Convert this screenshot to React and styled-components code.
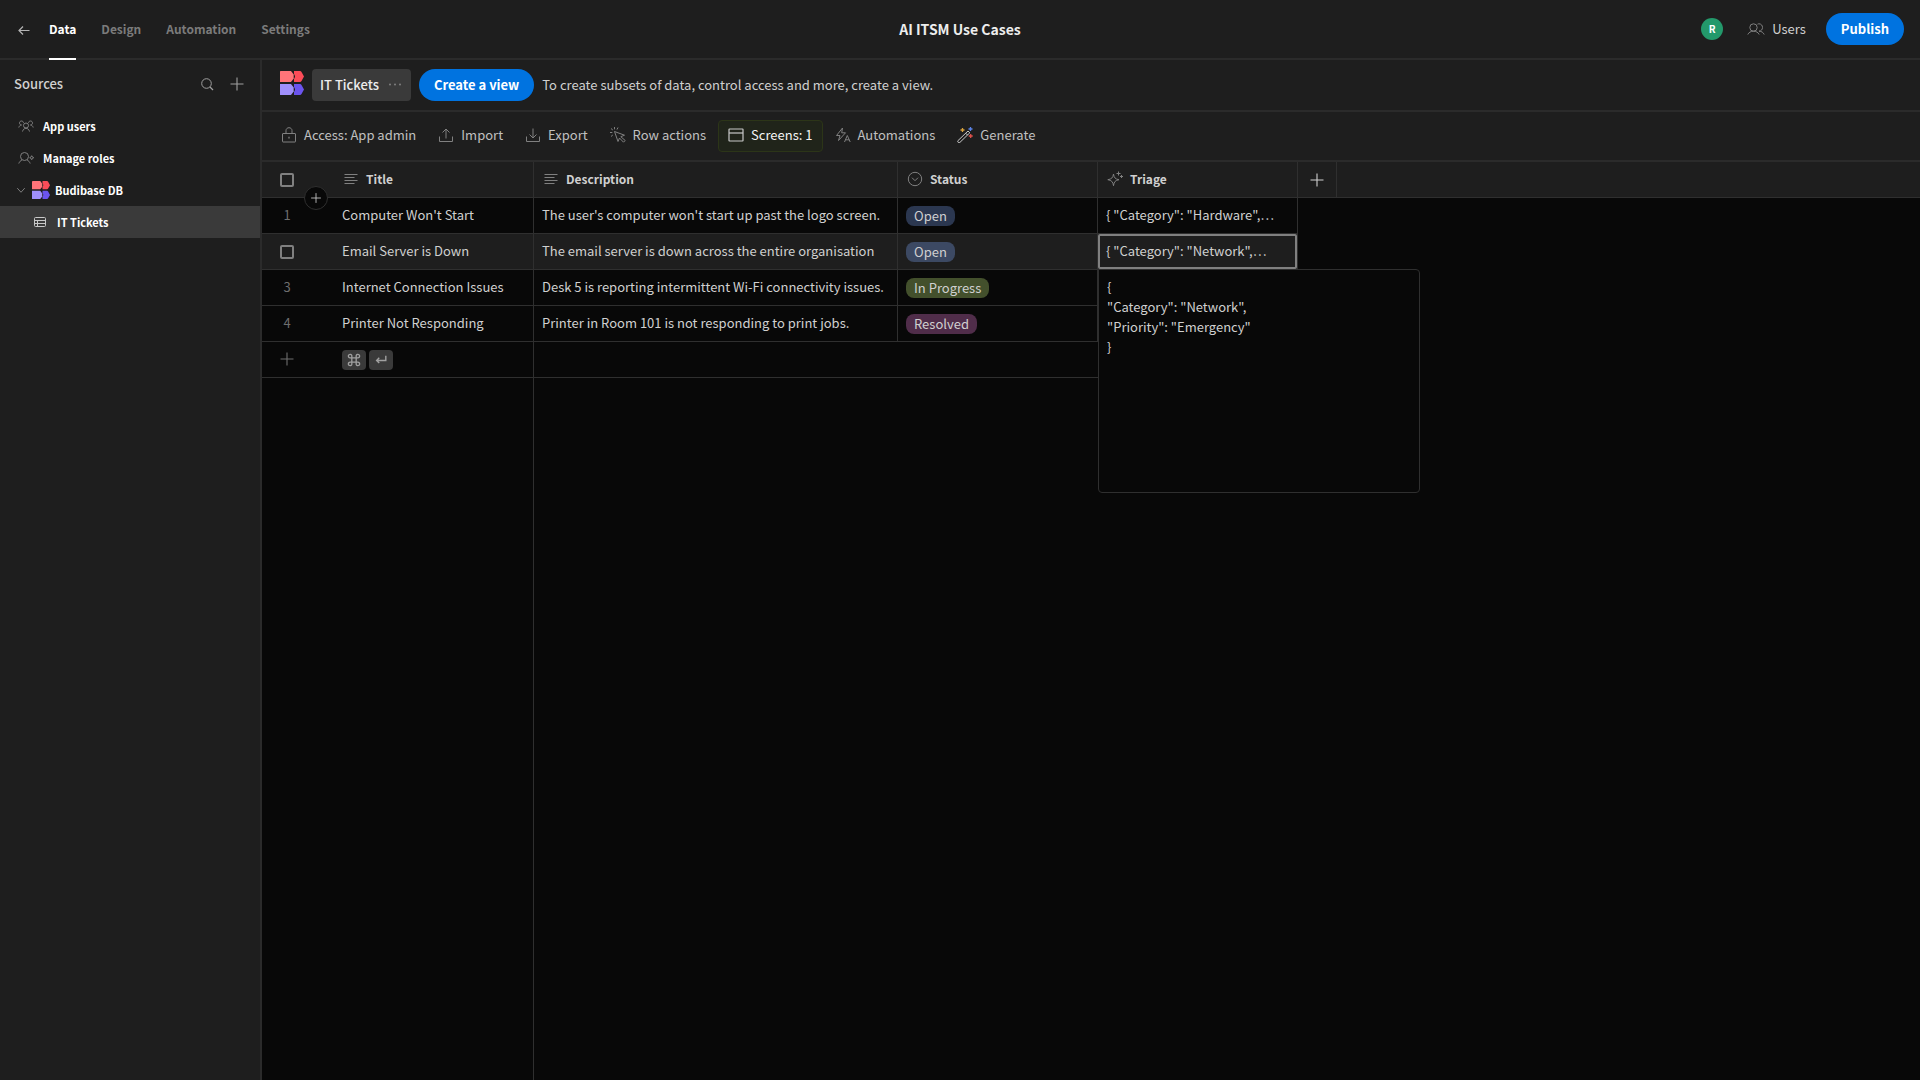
import React from 'react';
import styled, { createGlobalStyle, css } from 'styled-components';

const NAV = ['Data', 'Design', 'Automation', 'Settings'];

const TOOLS = [
  { label: 'Access: App admin', icon: LockIcon },
  { label: 'Import', icon: ImportIcon },
  { label: 'Export', icon: ExportIcon },
  { label: 'Row actions', icon: CursorIcon },
  { label: 'Screens: 1', icon: ScreenIcon, active: true },
  { label: 'Automations', icon: AutomationsIcon },
  { label: 'Generate', icon: WandIcon, bright: true },
];

const COLUMNS = [
  { label: 'Title', icon: TextIcon },
  { label: 'Description', icon: TextIcon },
  { label: 'Status', icon: OptionsIcon },
  { label: 'Triage', icon: SparkleIcon },
];

const ROWS = [
  {
    id: 1,
    title: "Computer Won't Start",
    description: "The user's computer won't start up past the logo screen.",
    status: 'Open',
    triage: '{ "Category": "Hardware",…',
  },
  {
    id: 2,
    title: 'Email Server is Down',
    description: 'The email server is down across the entire organisation',
    status: 'Open',
    triage: '{ "Category": "Network",…',
    hovered: true,
  },
  {
    id: 3,
    title: 'Internet Connection Issues',
    description: 'Desk 5 is reporting intermittent Wi-Fi connectivity issues.',
    status: 'In Progress',
    triage: '',
  },
  {
    id: 4,
    title: 'Printer Not Responding',
    description: 'Printer in Room 101 is not responding to print jobs.',
    status: 'Resolved',
    triage: '',
  },
];

const STATUS_COLORS = {
  Open: '#2b3750',
  'In Progress': '#43502c',
  Resolved: '#502d4a',
};

const TRIAGE_VALUE = `{
"Category": "Network",
"Priority": "Emergency"
}`;

export default function App() {
  return (
    <>
      <GlobalStyle />
      <Page>
        <TopBar />
        <Body>
          <Sources />
          <Main>
            <ViewBar>
              <Logo size={24} />
              <ViewTab type="button">
                IT Tickets
                <DotsIcon />
              </ViewTab>
              <PrimaryButton type="button">Create a view</PrimaryButton>
              <Hint>
                To create subsets of data, control access and more, create a
                view.
              </Hint>
            </ViewBar>
            <ToolBar>
              {TOOLS.map(({ label, icon: Icon, active, bright }) => (
                <ToolButton
                  key={label}
                  type="button"
                  $active={active}
                  $bright={bright}
                >
                  <Icon />
                  {label}
                </ToolButton>
              ))}
            </ToolBar>
            <DataGrid />
          </Main>
        </Body>
      </Page>
    </>
  );
}

function TopBar() {
  return (
    <Header>
      <Nav>
        <BackButton type="button" aria-label="Back">
          <BackIcon />
        </BackButton>
        {NAV.map((item, index) => (
          <NavLink key={item} href="#" $active={index === 0}>
            {item}
          </NavLink>
        ))}
      </Nav>
      <AppName>AI ITSM Use Cases</AppName>
      <HeaderRight>
        <Avatar>R</Avatar>
        <UsersButton type="button">
          <UsersIcon />
          Users
        </UsersButton>
        <PrimaryButton type="button">Publish</PrimaryButton>
      </HeaderRight>
    </Header>
  );
}

function Sources() {
  return (
    <Sidebar>
      <SidebarHeader>
        <SidebarTitle>Sources</SidebarTitle>
        <IconButton type="button" aria-label="Search sources">
          <SearchIcon />
        </IconButton>
        <IconButton type="button" aria-label="Add source">
          <PlusIcon />
        </IconButton>
      </SidebarHeader>
      <SourceLink href="#">
        <GroupIcon />
        App users
      </SourceLink>
      <SourceLink href="#">
        <RolesIcon />
        Manage roles
      </SourceLink>
      <SourceLink href="#" $parent>
        <ChevronIcon />
        <Logo size={18} />
        Budibase DB
      </SourceLink>
      <SourceLink href="#" $selected>
        <TableIcon />
        IT Tickets
      </SourceLink>
    </Sidebar>
  );
}

function DataGrid() {
  return (
    <GridWrap>
      <Grid>
        <colgroup>
          <Col $width={72} />
          <Col $width={200} />
          <Col $width={364} />
          <Col $width={200} />
          <Col $width={200} />
          <Col $width={39} />
          <col />
        </colgroup>
        <thead>
          <tr>
            <GutterHead>
              <GutterBox>
                <Checkbox aria-label="Select all rows" />
              </GutterBox>
              <InsertButton type="button" aria-label="Insert row">
                <PlusIcon />
              </InsertButton>
            </GutterHead>
            {COLUMNS.map(({ label, icon: Icon }) => (
              <HeadCell key={label}>
                <HeadLabel>
                  <Icon />
                  {label}
                </HeadLabel>
              </HeadCell>
            ))}
            <HeadCell>
              <AddColumn type="button" aria-label="Add column">
                <PlusIcon />
              </AddColumn>
            </HeadCell>
            <HeadRest />
          </tr>
        </thead>
        <tbody>
          {ROWS.map(row => (
            <Row key={row.id} $hovered={row.hovered}>
              <GutterCell>
                {row.hovered ? (
                  <GutterBox>
                    <Checkbox aria-label={`Select row ${row.id}`} />
                  </GutterBox>
                ) : (
                  <RowNumber>{row.id}</RowNumber>
                )}
              </GutterCell>
              <Cell>{row.title}</Cell>
              <Cell>{row.description}</Cell>
              <StatusCell>
                <Badge $color={STATUS_COLORS[row.status]} $light={row.hovered}>
                  {row.status}
                </Badge>
              </StatusCell>
              <Cell $focused={row.hovered}>
                {row.triage}
                {row.hovered && (
                  <Editor
                    aria-label="Triage"
                    readOnly
                    value={TRIAGE_VALUE}
                  />
                )}
              </Cell>
            </Row>
          ))}
          <tr>
            <GutterCell>
              <RowNumber>
                <PlusIcon />
              </RowNumber>
            </GutterCell>
            <StatusCell>
              <Keys>
                <Key>
                  <CommandIcon />
                </Key>
                <Key>
                  <ReturnIcon />
                </Key>
              </Keys>
            </StatusCell>
            <Cell colSpan={3} />
          </tr>
          <tr>
            <RestCell />
            <RestCell $line />
          </tr>
        </tbody>
      </Grid>
    </GridWrap>
  );
}

function Checkbox(props) {
  return <CheckInput type="checkbox" {...props} />;
}

/* Icons */

function Icon({ children, size = 16 }) {
  return (
    <Svg
      width={size}
      height={size}
      viewBox="0 0 16 16"
      fill="none"
      stroke="currentColor"
      aria-hidden="true"
    >
      {children}
    </Svg>
  );
}

function Logo({ size }) {
  return (
    <Svg width={size} height={size} viewBox="0 0 24 24" aria-hidden="true">
      <path d="M0 .5Q0 0 .5 0H11L13.700 3.500V7.500L11 11H0Z" fill="#ff7479" />
      <path d="M14 0H20Q21 0 21.500 1L24 5.500L21.500 10Q21 11 20 11H14V8L15 6V5L14 3Z" fill="#fb4c58" />
      <path d="M0 13H11L13.700 16.500V20.500L11 24H.5Q0 24 0 23.500Z" fill="#9f8ffb" />
      <path d="M14 13H20Q21 13 21.500 14L24 18.500L21.500 23Q21 24 20 24H14V21L15 19V18L14 16Z" fill="#6b54ee" />
    </Svg>
  );
}

function BackIcon() {
  return (
    <Icon>
      <path d="M13.500 8.500H3M7 4.500L3 8.500L7 12.500" strokeWidth="1.200" />
    </Icon>
  );
}

function SearchIcon() {
  return (
    <Icon>
      <circle cx="7.500" cy="7.500" r="4.800" />
      <path d="M11 11L14 14" strokeWidth="1.200" />
    </Icon>
  );
}

function PlusIcon() {
  return (
    <Icon>
      <path d="M8 1.500V14.500M1.500 8H14.500" strokeWidth="1.100" />
    </Icon>
  );
}

function DotsIcon() {
  return (
    <Icon>
      <g fill="currentColor" stroke="none">
        <circle cx="3" cy="7.500" r="1" />
        <circle cx="8" cy="7.500" r="1" />
        <circle cx="13" cy="7.500" r="1" />
      </g>
    </Icon>
  );
}

function ChevronIcon() {
  return (
    <Icon size={12}>
      <path d="M3 5.500L8 11L13 5.500" strokeWidth="1.300" />
    </Icon>
  );
}

function GroupIcon() {
  return (
    <Icon>
      <circle cx="8" cy="7.500" r="2.500" />
      <path d="M4.500 13.500C5 11.500 6.300 10.300 8 10.300S11 11.500 11.500 13.500" />
      <path d="M5.500 4.800C5.300 3.600 4.500 3 3.500 3C2.300 3 1.500 3.900 1.500 5S2.300 7 3.500 7C2.200 7.200 1.200 8 .8 9.500" />
      <path d="M10.500 4.800C10.700 3.600 11.500 3 12.500 3C13.700 3 14.500 3.900 14.500 5S13.700 7 12.500 7C13.800 7.200 14.800 8 15.200 9.500" />
    </Icon>
  );
}

function RolesIcon() {
  return (
    <Icon>
      <circle cx="6.500" cy="6.500" r="4" />
      <path d="M.8 13.500C1.500 11.700 2.600 10.600 4 9.900M9 9.900C10.400 10.600 11.500 11.700 12.200 13.500" />
      <circle cx="13.700" cy="7.700" r="1.300" />
      <path d="M13.700 5.500V6.400M13.700 9V9.900M11.500 7.700H12.400M15 7.700H15.900" />
    </Icon>
  );
}

function UsersIcon() {
  return (
    <Svg
      width="18"
      height="16"
      viewBox="0 0 18 16"
      fill="none"
      stroke="currentColor"
      aria-hidden="true"
    >
      <circle cx="6.500" cy="6.500" r="3.700" />
      <path d="M.8 13.500C1.800 11.400 3.800 10.200 6.500 10.200S11.200 11.400 12.200 13.500" />
      <path d="M10.500 3.200C11 2.900 11.500 2.800 12 2.800C14 2.800 15.500 4.400 15.500 6.500C15.500 8.500 14 10.200 12 10.200C14.500 10.200 16.200 11.400 17.200 13.500" />
    </Svg>
  );
}

function TableIcon() {
  return (
    <Icon>
      <rect x="2.500" y="3.500" width="11" height="9" rx="1" />
      <path d="M2.500 6.500H13.500M2.500 9.500H13.500M5.500 6.500V12.500" />
    </Icon>
  );
}

function LockIcon() {
  return (
    <Icon>
      <rect x="1.500" y="6.500" width="13" height="8.500" rx=".5" />
      <path d="M5 6.500V3.500C5 1.900 6.300 .7 8 .7S11 1.900 11 3.500V6.500" />
      <path d="M8 9.800V11.500" strokeWidth="1.300" />
    </Icon>
  );
}

function ImportIcon() {
  return (
    <Icon>
      <path d="M1.500 9.500V14.500H14.500V9.500" />
      <path d="M8 11.500V2.500M4.500 5.500L8 2L11.500 5.500" />
    </Icon>
  );
}

function ExportIcon() {
  return (
    <Icon>
      <path d="M1.500 9.500V14.500H14.500V9.500" />
      <path d="M8 1.500V10.500M4.500 7.500L8 11L11.500 7.500" />
    </Icon>
  );
}

function CursorIcon() {
  return (
    <Icon>
      <path d="M4.500 4.500L14.500 8.200L10.800 9.700L15.200 13.500L13.500 15.200L9.500 11L8 14.500Z" />
      <path d="M4.500 0V2.300M1 1.500L2.800 3M0 5.500H2.300M8 .5L7 2.500M1 9.500L2.800 8" />
    </Icon>
  );
}

function ScreenIcon() {
  return (
    <Icon>
      <rect x="1" y="2" width="14" height="12" rx=".5" strokeWidth="1.200" />
      <path d="M1 6H15" strokeWidth="1.200" />
    </Icon>
  );
}

function AutomationsIcon() {
  return (
    <Icon>
      <path d="M7.500 1L1.500 8.500H5L3.500 13.500L10.500 5.800H6.700Z" />
      <path d="M9.500 15L12.300 8.500L15.200 15M10.500 12.800H14.200" />
    </Icon>
  );
}

function WandIcon() {
  return (
    <Icon>
      <path d="M.8 13.800L11 4L12.800 5.800L2.800 15.500C1.500 16 .5 15.200 .8 13.800Z" />
      <path d="M8.700 6.200L10.500 8" />
      <path d="M5.500 1V5M3.500 3H7.500" stroke="#d9a23c" strokeWidth="1.300" />
      <path d="M13.500 0V4M11.500 2H15.500" stroke="#5b84e8" strokeWidth="1.300" />
      <path d="M13.700 7V11M11.700 9H15.700" stroke="#e0524c" strokeWidth="1.300" />
    </Icon>
  );
}

function TextIcon() {
  return (
    <Icon>
      <path d="M1.500 3.500H14.500M1.500 6.500H11.500M1.500 9.500H14.500M1.500 12.500H11.500" />
    </Icon>
  );
}

function OptionsIcon() {
  return (
    <Icon>
      <circle cx="8" cy="8" r="6.700" />
      <path d="M5 6.700L8 9.700L11 6.700" />
    </Icon>
  );
}

function SparkleIcon() {
  return (
    <Icon>
      <path d="M6.500 3C7 6.700 8.300 8.200 12 8.700C8.300 9.300 7 10.800 6.500 14.700C6 10.800 4.500 9.300 .8 8.700C4.500 8.200 6 6.700 6.500 3Z" />
      <path d="M11.500 .5V4.500M9.500 2.500H13.500M14.500 4V7M13 5.500H16" />
    </Icon>
  );
}

function CommandIcon() {
  return (
    <Icon size={14}>
      <path
        d="M5.500 5.500H10.500V10.500H5.500ZM5.500 5.500V4A2 2 0 1 0 3.500 5.500ZM10.500 5.500V4A2 2 0 1 1 12.500 5.500ZM5.500 10.500V12A2 2 0 1 1 3.500 10.500ZM10.500 10.500V12A2 2 0 1 0 12.500 10.500Z"
        strokeWidth="1.500"
      />
    </Icon>
  );
}

function ReturnIcon() {
  return (
    <Icon size={14}>
      <path d="M13.500 3V8.500H3M6 5.500L3 8.500L6 11.500" strokeWidth="1.600" />
    </Icon>
  );
}

const GlobalStyle = createGlobalStyle`
  * {
    box-sizing: border-box;
  }

  body {
    margin: 0;
    background: #080808;
    color: #d0d0d0;
    font-family: 'Noto Sans CJK JP', 'Open Sans', sans-serif;
    font-size: 13px;
    line-height: 20px;
  }

  button,
  textarea {
    font: inherit;
    color: inherit;
  }

  button {
    display: flex;
    align-items: center;
    margin: 0;
    padding: 0;
    border: none;
    background: none;
  }

  a {
    color: inherit;
    text-decoration: none;
  }
`;

const Svg = styled.svg`
  display: block;
  flex: none;
`;

const Page = styled.div`
  display: flex;
  flex-direction: column;
  min-height: 100vh;
`;

const Header = styled.header`
  display: grid;
  grid-template-columns: 1fr auto 1fr;
  height: 60px;
  padding: 0 16px;
  background: #1e1e1e;
  border-bottom: 2px solid #2b2b2b;
`;

const Nav = styled.nav`
  display: flex;
  gap: 25px;
  margin-bottom: -2px;
`;

const BackButton = styled.button`
  color: #b4b4b4;
  margin-right: -8px;
`;

const NavLink = styled.a`
  display: flex;
  align-items: center;
  height: 60px;
  font-size: 12px;
  font-weight: 700;
  color: #7b7b7b;
  border-bottom: 2px solid transparent;

  ${props =>
    props.$active &&
    css`
      color: #fff;
      border-color: #fff;
    `}
`;

const AppName = styled.h1`
  align-self: center;
  margin: 0;
  font-size: 14px;
  font-weight: 700;
  line-height: 20px;
  color: #ededed;
`;

const HeaderRight = styled.div`
  display: flex;
  align-items: center;
  justify-content: flex-end;
`;

const Avatar = styled.span`
  width: 22px;
  height: 22px;
  border-radius: 50%;
  background: #23996b;
  color: #fff;
  font-size: 10px;
  font-weight: 700;
  line-height: 22px;
  text-align: center;
`;

const UsersButton = styled.button`
  gap: 7px;
  margin: 0 20px 0 24px;

  svg {
    color: #808080;
  }
`;

const PrimaryButton = styled.button`
  height: 32px;
  padding: 0 15px;
  border-radius: 16px;
  background: #0073e0;
  color: #fff;
  font-weight: 700;
  white-space: nowrap;
`;

const Body = styled.div`
  display: flex;
  flex: 1;
`;

const Sidebar = styled.aside`
  flex: none;
  width: 262px;
  background: #1e1e1e;
  border-right: 2px solid #2b2b2b;
`;

const SidebarHeader = styled.div`
  display: flex;
  align-items: center;
  gap: 14px;
  height: 50px;
  padding: 0 15px 2px 14px;
`;

const SidebarTitle = styled.h2`
  flex: 1;
  margin: 0;
  font-size: 13px;
  font-weight: 500;
`;

const IconButton = styled.button`
  color: #a0a0a0;
`;

const SourceLink = styled.a`
  display: flex;
  align-items: center;
  gap: 9px;
  height: 32px;
  padding-left: 18px;
  font-size: 11px;
  font-weight: 700;
  color: #fff;

  svg {
    color: #808080;
  }

  ${props =>
    props.$parent &&
    css`
      gap: 5px;
      padding-left: 15px;
    `}

  ${props =>
    props.$selected &&
    css`
      padding-left: 32px;
      background: #3a3a3a;

      svg {
        color: #c8c8c8;
      }
    `}
`;

const Main = styled.main`
  display: flex;
  flex: 1;
  flex-direction: column;
  min-width: 0;
`;

const ViewBar = styled.div`
  display: flex;
  align-items: center;
  gap: 8px;
  height: 52px;
  padding: 0 18px;
  background: #1e1e1e;
  border-bottom: 2px solid #2b2b2b;

  > svg {
    margin-bottom: 4px;
  }
`;

const ViewTab = styled.button`
  gap: 8px;
  height: 32px;
  padding: 0 8px;
  border-radius: 4px;
  background: #3a3a3a;
  color: #ededed;
  font-weight: 500;

  svg {
    color: #808080;
  }
`;

const Hint = styled.p`
  margin: 0;
`;

const ToolBar = styled.div`
  display: flex;
  align-items: center;
  gap: 2px;
  height: 50px;
  padding: 0 9px;
  background: #1e1e1e;
  border-bottom: 2px solid #2b2b2b;
`;

const ToolButton = styled.button`
  gap: 7px;
  height: 32px;
  padding: 0 9px 2px;
  border: 1px solid transparent;
  border-radius: 4px;
  color: #c0c0c0;
  white-space: nowrap;

  svg {
    color: ${props => (props.$bright ? '#c8c8c8' : '#808080')};
  }

  ${props =>
    props.$active &&
    css`
      border-color: #2c3518;
      background: #20241a;
      color: #f5f5f5;

      svg {
        color: #c8c8c8;
      }
    `}
`;

const GridWrap = styled.div`
  display: flex;
  flex: 1;
`;

const Grid = styled.table`
  flex: 1;
  table-layout: fixed;
  width: 100%;
  border-spacing: 0;
`;

const Col = styled.col`
  width: ${props => props.$width}px;
`;

const HeadRest = styled.th`
  height: 36px;
  padding: 0;
  background: #1e1e1e;
  border-bottom: 1px solid #2f2f2f;
`;

const HeadCell = styled(HeadRest)`
  border-right: 1px solid #2f2f2f;
`;

const HeadLabel = styled.div`
  display: flex;
  align-items: center;
  gap: 7px;
  padding: 0 0 1px 9px;
  font-size: 12px;
  font-weight: 700;

  svg {
    color: #808080;
  }
`;

const GutterHead = styled(HeadRest)`
  position: relative;
`;

const GutterBox = styled.div`
  display: flex;
  align-items: center;
  justify-content: center;
  width: 16px;
  margin-left: 17px;
`;

const RowNumber = styled(GutterBox)`
  padding-bottom: 2px;
`;

const InsertButton = styled.button`
  position: absolute;
  z-index: 1;
  left: 42px;
  bottom: -13px;
  justify-content: center;
  width: 24px;
  height: 24px;
  border: 1px solid #2f2f2f;
  border-radius: 50%;
  background: #080808;

  svg {
    width: 12px;
    height: 12px;
  }
`;

const AddColumn = styled.button`
  justify-content: center;
  width: 100%;
  height: 35px;
`;

const Cell = styled.td`
  position: relative;
  height: 36px;
  padding: 0 8px 2px;
  border-right: 1px solid #2f2f2f;
  border-bottom: 1px solid #2f2f2f;
  white-space: nowrap;

  ${props =>
    props.$focused &&
    css`
      &::after {
        content: '';
        position: absolute;
        inset: 0;
        border: 2px solid #808080;
        border-radius: 2px;
        pointer-events: none;
      }
    `}
`;

const StatusCell = styled(Cell)`
  padding: 0 8px;
`;

const GutterCell = styled(Cell)`
  padding: 0;
  border-right: none;
  color: #6e6e6e;
`;

const Row = styled.tr`
  td {
    background: ${props => (props.$hovered ? '#1e1e1e' : '#080808')};
  }
`;

const CheckInput = styled.input`
  appearance: none;
  display: block;
  flex: none;
  width: 14px;
  height: 14px;
  margin: 0;
  border: 2px solid #808080;
  border-radius: 2px;
`;

const Badge = styled.span`
  display: block;
  width: fit-content;
  padding: 0 8px;
  border-radius: 8px;
  background: ${props => (props.$light ? '#3c4963' : props.$color)};
`;

const Editor = styled.textarea`
  position: absolute;
  z-index: 2;
  top: 35px;
  left: 0;
  width: 322px;
  height: 224px;
  padding: 7px 8px;
  border: 1px solid #2f2f2f;
  border-radius: 0 4px 4px 4px;
  outline: none;
  background: #080808;
  resize: none;
`;

const Keys = styled.div`
  display: flex;
  gap: 3px;
`;

const Key = styled.kbd`
  display: flex;
  align-items: center;
  justify-content: center;
  width: 24px;
  height: 20px;
  border-radius: 4px;
  background: #3a3a3a;
  color: #a0a0a0;
`;

const RestCell = styled.td`
  padding: 0;
  border-right: ${props => (props.$line ? '1px solid #2f2f2f' : 'none')};
`;
